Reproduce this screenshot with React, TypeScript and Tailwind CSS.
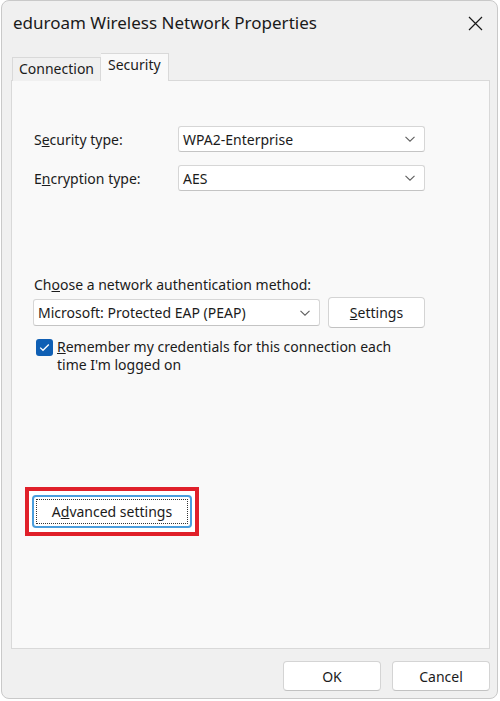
import React from "react"

const font = { fontFamily: '"Segoe UI", "Noto Sans", "Liberation Sans", sans-serif' }

function Chevron() {
  return (
    <svg width="12" height="8" viewBox="0 0 12 8" className="shrink-0">
      <path d="M1.5 1.8 L6 6.2 L10.5 1.8" fill="none" stroke="#5f5f5f" strokeWidth="1.1" />
    </svg>
  )
}

function Dropdown({ value, className }: { value: string; className: string }) {
  return (
    <div
      className={`flex items-center justify-between bg-white border border-[#d6d6d6] border-b-[#c4c4c4] rounded-[3px] pl-[4px] pr-[8px] text-[14px] text-[#1b1b1b] ${className}`}
    >
      <span>{value}</span>
      <Chevron />
    </div>
  )
}

function Btn({ children, className }: { children: React.ReactNode; className: string }) {
  return (
    <div
      className={`flex items-center justify-center bg-white border border-[#d4d4d4] border-b-[#c2c2c2] rounded-[4px] text-[14px] text-[#1b1b1b] ${className}`}
    >
      {children}
    </div>
  )
}

export default function App() {
  return (
    <div className="w-[500px] h-[701px] bg-white" style={font}>
      <div className="ml-[1px] w-[497px] h-[699px] rounded-[8px] border border-[#c9c9c9] bg-[#f0f0f0] flex flex-col overflow-hidden">
        {/* title bar */}
        <div className="h-[44px] flex items-center justify-between pl-[11px] pr-[14px]">
          <span className="text-[17px] text-[#1a1a1a] -mt-[1px]">eduroam Wireless Network Properties</span>
          <svg width="15" height="15" viewBox="0 0 15 15">
            <path d="M1 1 L14 14 M14 1 L1 14" stroke="#1a1a1a" strokeWidth="1.2" />
          </svg>
        </div>

        {/* tabs */}
        <div className="mt-[7px] pl-[10px] flex items-end h-[28px] relative z-10">
          <div className="h-[24px] px-[6px] flex items-center pb-[3px] border border-b-0 border-[#d9d9d9] bg-[#f0f0f0] text-[14px] text-[#1b1b1b] mb-[-1px]">
            Connection
          </div>
          <div className="h-[28px] px-[7px] flex items-start border border-b-0 border-l-0 border-[#d9d9d9] bg-[#f9f9f9] text-[14px] text-[#1b1b1b] mb-[-1px]">
            Security
          </div>
        </div>

        {/* panel */}
        <div className="ml-[9px] w-[479px] h-[569px] border border-[#d9d9d9] bg-[#f9f9f9] flex flex-col pl-[22px] text-[14px] text-[#1b1b1b]">
          <div className="mt-[45px] flex items-center h-[26px]">
            <span className="w-[144px]">
              S<u>e</u>curity type:
            </span>
            <Dropdown value="WPA2-Enterprise" className="w-[247px] h-[26px]" />
          </div>
          <div className="mt-[13px] flex items-center h-[26px]">
            <span className="w-[144px]">
              E<u>n</u>cryption type:
            </span>
            <Dropdown value="AES" className="w-[247px] h-[26px]" />
          </div>

          <div className="mt-[85px] leading-[18px]">
            Ch<u>o</u>ose a network authentication method:
          </div>
          <div className="mt-[3px] flex items-center gap-[8px]">
            <Dropdown value="Microsoft: Protected EAP (PEAP)" className="w-[287px] h-[27px] -ml-[1px]" />
            <Btn className="w-[97px] h-[31px]">
              <span>
                <u>S</u>ettings
              </span>
            </Btn>
          </div>
          <div className="mt-[10px] flex items-start">
            <div className="w-[17px] h-[17px] ml-[2px] mt-[1px] rounded-[3px] bg-[#0f5fb4] flex items-center justify-center shrink-0">
              <svg width="11" height="9" viewBox="0 0 11 9">
                <path d="M1.2 4.6 L4 7.3 L9.8 1.5" fill="none" stroke="white" strokeWidth="1.3" />
              </svg>
            </div>
            <div className="ml-[4px] leading-[18px]">
              <u>R</u>emember my credentials for this connection each
              <br />
              time I'm logged on
            </div>
          </div>

          <div className="mt-[113px] -ml-[9px] w-[174px] h-[49px] border-[4px] border-[#e0202a] bg-white flex items-center justify-center">
            <div className="w-[160px] h-[33px] rounded-[4px] border-[2px] border-[#4a9ede] bg-white p-[2px]">
              <div className="w-full h-full border border-dotted border-[#333] flex items-center justify-center">
                <span>
                  A<u>d</u>vanced settings
                </span>
              </div>
            </div>
          </div>
        </div>

        {/* footer */}
        <div className="mt-[12px] flex justify-end gap-[11px] pr-[7px]">
          <Btn className="w-[98px] h-[30px]">OK</Btn>
          <Btn className="w-[98px] h-[30px]">Cancel</Btn>
        </div>
      </div>
    </div>
  )
}
